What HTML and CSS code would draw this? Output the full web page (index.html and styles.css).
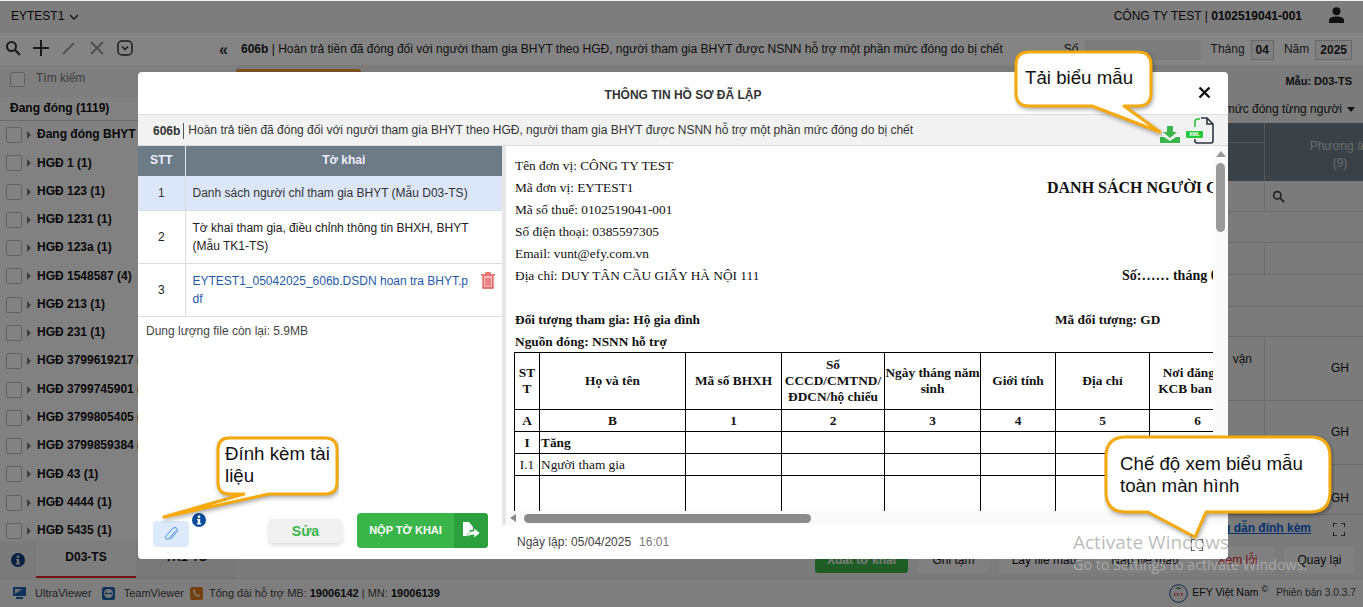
FILE: index.html
```html
<!DOCTYPE html>
<html lang="vi">
<head>
<meta charset="utf-8">
<title>Thông tin hồ sơ đã lập</title>
<link rel="stylesheet" href="styles.css">
</head>
<body>
<div class="app">
  <header class="topbar">
    <div class="unit">EYTEST1 <svg class="chev" width="10" height="6" viewBox="0 0 10 6"><path d="M1 1l4 4 4-4" fill="none" stroke="#222" stroke-width="1.4"/></svg></div>
    <div class="company">CÔNG TY TEST | <b>0102519041-001</b></div>
    <svg class="user" width="17" height="16" viewBox="0 0 17 16"><circle cx="8.5" cy="4.2" r="4" fill="#222"/><path d="M1 16v-2.5C1 10.500 4 9.500 8.500 9.500S16 10.500 16 13.500V16z" fill="#222"/></svg>
  </header>
  <div class="main">
    <aside class="sidebar">
      <div class="tools">
        <svg width="16" height="16" viewBox="0 0 16 16"><circle cx="6.500" cy="6.500" r="4.500" fill="none" stroke="#333" stroke-width="2"/><path d="M10 10l5 5" stroke="#333" stroke-width="2.200"/></svg>
        <svg width="16" height="16" viewBox="0 0 16 16"><path d="M8 0v16M0 8h16" stroke="#333" stroke-width="2"/></svg>
        <svg width="16" height="16" viewBox="0 0 16 16"><path d="M2 14L13 3" stroke="#9a9a9a" stroke-width="2"/></svg>
        <svg width="16" height="16" viewBox="0 0 16 16"><path d="M2 2l12 12M14 2L2 14" stroke="#9a9a9a" stroke-width="2"/></svg>
        <svg width="16" height="16" viewBox="0 0 16 16"><rect x="1" y="1" width="14" height="14" rx="4" fill="none" stroke="#333" stroke-width="1.500"/><path d="M5 6.500l3 3 3-3" fill="none" stroke="#333" stroke-width="1.500"/></svg>
        <span class="collapse">«</span>
      </div>
      <div class="search-row"><span class="check"></span><span>Tìm kiếm</span></div>
      <div class="group-title">Đang đóng (1119)</div>
      <ul class="tree">
        <li><span class="check"></span><i></i>Đang đóng BHYT (1119)</li>
        <li><span class="check"></span><i></i>HGĐ 1 (1)</li>
        <li><span class="check"></span><i></i>HGĐ 123 (1)</li>
        <li><span class="check"></span><i></i>HGĐ 1231 (1)</li>
        <li><span class="check"></span><i></i>HGĐ 123a (1)</li>
        <li><span class="check"></span><i></i>HGĐ 1548587 (4)</li>
        <li><span class="check"></span><i></i>HGĐ 213 (1)</li>
        <li><span class="check"></span><i></i>HGĐ 231 (1)</li>
        <li><span class="check"></span><i></i>HGĐ 3799619217 (1)</li>
        <li><span class="check"></span><i></i>HGĐ 3799745901 (1)</li>
        <li><span class="check"></span><i></i>HGĐ 3799805405 (1)</li>
        <li><span class="check"></span><i></i>HGĐ 3799859384 (1)</li>
        <li><span class="check"></span><i></i>HGĐ 43 (1)</li>
        <li><span class="check"></span><i></i>HGĐ 4444 (1)</li>
        <li><span class="check"></span><i></i>HGĐ 5435 (1)</li>
      </ul>
      <div class="tabs">
        <span class="tab-info"><svg width="14" height="14" viewBox="0 0 14 14"><circle cx="7" cy="7" r="7" fill="#0b3f80"/><rect x="5.800" y="2.500" width="2.400" height="2.400" fill="#ddd"/><path d="M5 6h3.200v4.200H9.200V11.500H4.800V10.200h1V7.200H5z" fill="#ddd"/></svg></span>
        <span class="tab active">D03-TS</span>
        <span class="tab">TK1-TS</span>
      </div>
    </aside>
    <section class="content">
      <div class="title-row">
        <div class="title-text"><b>606b</b> | Hoàn trả tiền đã đóng đối với người tham gia BHYT theo HGĐ, người tham gia BHYT được NSNN hỗ trợ một phần mức đóng do bị chết</div>
        <span class="lbl-so">Số</span><span class="input-so"></span>
        <span class="lbl">Tháng</span><span class="box">04</span>
        <span class="lbl">Năm</span><span class="box">2025</span>
      </div>
      <div class="form-row"><span class="brown"></span><b class="form-code">Mẫu: D03-TS</b></div>
      <div class="filter-row">Quy định mức đóng từng người <i class="caret"></i></div>
      <div class="grid">
        <div class="gh"><span class="gh-line"></span></div><div class="gh gh-r">Phương án<br>(9)</div>
        <div class="gc h31"></div><div class="gc h31 gc-r"><svg width="13" height="13" viewBox="0 0 16 16"><circle cx="6.500" cy="6.500" r="4.500" fill="none" stroke="#444" stroke-width="2"/><path d="M10 10l5 5" stroke="#444" stroke-width="2.200"/></svg></div>
        <div class="gc h31 wide"></div>
        <div class="gc h32"></div><div class="gc h32 gc-r"></div>
        <div class="gc h32 wide"></div>
        <div class="gc h30 wide"></div>
        <div class="gc h64">vận</div><div class="gc h64 gc-r gh-c">GH</div>
        <div class="gc h64"></div><div class="gc h64 gc-r gh-c">GH</div>
        <div class="gc h50"></div><div class="gc h50 gc-r gh-c gh3">GH</div>
      </div>
      <div class="link-row"><a class="guide">Hướng dẫn đính kèm</a><svg width="12" height="13" viewBox="0 0 12 13"><path d="M0 4V0h4M8 0h4v4M12 9v4H8M4 13H0V9" fill="none" stroke="#222" stroke-width="1.600"/></svg></div>
      <div class="actions">
        <button class="act green">Xuất tờ khai</button>
        <button class="act w71">Ghi tạm</button>
        <button class="act w90">Lấy file mẫu</button>
        <button class="act w92">Nạp file mẫu</button>
        <button class="act w73 red">Xem lỗi</button>
        <button class="act w71">Quay lại</button>
      </div>
    </section>
  </div>
  <footer class="footer">
    <svg class="f1" width="13" height="12" viewBox="0 0 13 12"><rect width="13" height="9" fill="#1d62ad"/><path d="M2 7l7-5H2z" fill="#d5d5d5"/><rect x="3" y="10" width="7" height="2" fill="#1d62ad"/></svg>
    <span class="f-link w-uv">UltraViewer</span>
    <svg class="f1" width="13" height="13" viewBox="0 0 13 13"><rect width="13" height="13" rx="2" fill="#1d62ad"/><circle cx="6.500" cy="6.500" r="4.500" fill="#e4e4e4"/><path d="M2.500 6.500l2-1.500v1h4V5l2 1.500-2 1.500V7h-4v1z" fill="#1d62ad"/></svg>
    <span class="f-link w-tv">TeamViewer</span>
    <svg class="f1" width="13" height="13" viewBox="0 0 13 13"><rect width="13" height="13" rx="2" fill="#e07b1f"/><path d="M3.500 3c1-.8 1.500-.5 2 1 .2.600-.7 1-.5 1.500.4 1 1.200 1.800 2 2.300.5.200.9-.7 1.500-.5 1.500.5 1.800 1 1 2-1 1-3 .5-4.500-1S2.500 4 3.500 3z" fill="#f5e3c8"/></svg>
    <span class="hotline">Tổng đài hỗ trợ MB: <b>19006142</b> | MN: <b>19006139</b></span>
    <span class="spacer"></span>
    <svg class="efy" width="19" height="19" viewBox="0 0 19 19"><circle cx="9.500" cy="9.500" r="8.800" fill="#eee" stroke="#1d4f91" stroke-width="1"/><text x="9.500" y="11.500" text-anchor="middle" class="efy-t">EFY</text><path d="M6 5l3.500-2L13 5z" fill="#2f8f46"/></svg>
    <span class="efy-name">EFY Việt Nam<sup>©</sup></span>
    <span class="version">Phiên bản 3.0.3.7</span>
  </footer>
</div>

<div class="backdrop"></div>

<div class="modal">
  <div class="m-head">THÔNG TIN HỒ SƠ ĐÃ LẬP
    <svg class="m-close" width="13" height="13" viewBox="0 0 13 13"><path d="M1.500 1.500l10 10M11.500 1.500l-10 10" stroke="#111" stroke-width="2.400"/></svg>
  </div>
  <div class="m-sub">
    <b>606b</b><span class="m-sub-text">Hoàn trả tiền đã đóng đối với người tham gia BHYT theo HGĐ, người tham gia BHYT được NSNN hỗ trợ một phần mức đóng do bị chết</span>
    <svg class="dl" width="20" height="17" viewBox="0 0 20 17"><path d="M7 0h6v6h4l-7 6-7-6h4z" fill="#3ab54a"/><path d="M0 11h4l6 4 6-4h4v6H0z" fill="#3ab54a"/></svg>
    <span class="xml-ic">
      <svg width="28" height="27" viewBox="0 0 28 27"><path d="M9 10V5c0-2 1-3 3-3h2" fill="none" stroke="#2fc03d" stroke-width="1.600"/><path d="M15 1h6l6 6v17c0 1-1 2-2 2H11c-1 0-2-.5-2-2v-2M21 1v6h6" fill="none" stroke="#2b3440" stroke-width="1.600"/></svg>
      <span class="xml-badge">XML</span>
    </span>
  </div>
  <div class="m-body">
    <div class="m-left">
      <table class="forms">
        <thead><tr><th class="c-stt">STT</th><th>Tờ khai</th></tr></thead>
        <tbody>
          <tr class="sel r1"><td class="c-stt">1</td><td>Danh sách người chỉ tham gia BHYT (Mẫu D03-TS)</td></tr>
          <tr class="r2"><td class="c-stt">2</td><td>Tờ khai tham gia, điều chỉnh thông tin BHXH, BHYT (Mẫu TK1-TS)</td></tr>
          <tr class="r2"><td class="c-stt">3</td><td class="file-cell"><a class="file">EYTEST1_05042025_606b.DSDN hoan tra BHYT.pdf</a>
            <svg class="trash" width="14" height="17" viewBox="0 0 14 17"><path d="M0 3h14M5 3V1h4v2" fill="none" stroke="#e0504f" stroke-width="1.300"/><path d="M2 4v12h10V4" fill="#f4b9b8" stroke="#e0504f" stroke-width="1.300"/><path d="M5 6v8M7 6v8M9 6v8" stroke="#e0504f"/></svg></td></tr>
        </tbody>
      </table>
      <p class="quota">Dung lượng file còn lại: 5.9MB</p>
      <div class="m-actions">
        <span class="clip-wrap">
          <button class="clip"><svg width="14" height="16" viewBox="0 0 14 16"><path d="M11.500 4L5 11.500c-1 1.100-2.300.9-3 .2s-.7-2 .2-3l6.300-7c1.500-1.500 3.500-1.200 4.300-.3s.8 2.500-.3 3.800L6.500 12.500" transform="translate(0 1)" fill="none" stroke="#3b86e0" stroke-width="1"/></svg></button>
          <svg class="clip-info" width="14" height="14" viewBox="0 0 14 14"><circle cx="7" cy="7" r="7" fill="#0b4c9c"/><rect x="5.800" y="2.500" width="2.400" height="2.400" fill="#fff"/><path d="M5 6h3.200v4.200H9.200V11.500H4.800V10.200h1V7.200H5z" fill="#fff"/></svg>
        </span>
        <button class="edit">Sửa</button>
        <button class="submit"><span class="submit-t">NỘP TỜ KHAI</span><span class="submit-i"><svg width="18" height="17" viewBox="0 0 18 17"><path d="M1 0h6l4 5v3H8v6H1z" fill="#fff"/><path d="M5 15c0-4 3-6 7-6V6l6 5-6 5v-3c-3 0-5 0-7 2z" fill="#fff" stroke="#2ba03c" stroke-width=".6"/></svg></span></button>
      </div>
    </div>
    <div class="m-right">
      <div class="doc-view">
        <div class="doc">
          <div class="doc-top">
            <div class="doc-info">
              <p>Tên đơn vị: CÔNG TY TEST</p>
              <p>Mã đơn vị: EYTEST1</p>
              <p>Mã số thuế: 0102519041-001</p>
              <p>Số điện thoại: 0385597305</p>
              <p>Email: vunt@efy.com.vn</p>
              <p>Địa chỉ: DUY TÂN CẦU GIẤY HÀ NỘI 111</p>
            </div>
            <div class="doc-title">
              <h2>DANH SÁCH NGƯỜI CHỈ THAM GIA BHYT</h2>
              <p class="doc-no">Số:…… tháng 04 năm 2025</p>
            </div>
          </div>
          <div class="doc-meta"><b>Đối tượng tham gia: Hộ gia đình</b><b class="doc-mdt">Mã đối tượng: GD</b></div>
          <p class="doc-src"><b>Nguồn đóng: NSNN hỗ trợ</b></p>
          <table class="doc-table">
            <colgroup><col class="d1"><col class="d2"><col class="d3"><col class="d4"><col class="d3"><col class="d6"><col class="d7"><col class="d8"></colgroup>
            <tr class="dh"><th>STT</th><th>Họ và tên</th><th>Mã số BHXH</th><th>Số<br>CCCD/CMTND/<br>ĐDCN/hộ chiếu</th><th>Ngày tháng năm sinh</th><th>Giới tính</th><th>Địa chỉ</th><th>Nơi đăng ký KCB ban đầu</th></tr>
            <tr class="dr"><th>A</th><th>B</th><th>1</th><th>2</th><th>3</th><th>4</th><th>5</th><th>6</th></tr>
            <tr class="dr"><th>I</th><th class="l">Tăng</th><td></td><td></td><td></td><td></td><td></td><td></td></tr>
            <tr class="dr"><td class="c">I.1</td><td>Người tham gia</td><td></td><td></td><td></td><td></td><td></td><td></td></tr>
            <tr class="dl-row"><td></td><td></td><td></td><td></td><td></td><td></td><td></td><td></td></tr>
          </table>
        </div>
        <div class="vbar"><i class="v-up"></i><i class="v-thumb"></i></div>
        <div class="hbar"><i class="h-left"></i><i class="h-thumb"></i></div>
      </div>
      <div class="doc-foot"><span>Ngày lập: 05/04/2025</span><span class="time">16:01</span>
        <svg class="fs" width="12" height="12" viewBox="0 0 12 12"><path d="M0 4V0h4M8 0h4v4M12 8v4H8M4 12H0V8" fill="none" stroke="#333" stroke-width="1.600"/></svg>
      </div>
    </div>
  </div>
</div>

<div class="callout c-a">
  <svg width="150" height="90" viewBox="0 0 150 90"><path class="shape" d="M15 2H124Q137 2 137 15V43Q137 56 124 56H110L146 82 78 56H15Q2 56 2 43V15Q2 2 15 2Z"/></svg>
  <span class="c-text">Tải biểu mẫu</span>
</div>
<div class="callout c-b">
  <svg width="190" height="90" viewBox="0 0 190 90"><path class="shape" d="M80 2H176Q188 2 188 14V46Q188 58 176 58H120L15 81 95 58H80Q69 58 69 46V14Q69 2 80 2Z"/></svg>
  <span class="c-text">Đính kèm tài liệu</span>
</div>
<div class="callout c-c">
  <svg width="230" height="106" viewBox="0 0 230 106"><path class="shape" d="M22 2H206Q226 2 226 22V57Q226 77 206 77H102L91 102 44 77H22Q2 77 2 57V22Q2 2 22 2Z"/></svg>
  <span class="c-text">Chế độ xem biểu mẫu toàn màn hình</span>
</div>

<div class="watermark"><div class="wm1">Activate Windows</div><div class="wm2">Go to Settings to activate Windows.</div></div>
</body>
</html>
```
FILE: styles.css
```css
* { box-sizing: border-box; }
html, body { margin: 0; height: 100%; }
body {
  position: relative;
  width: 1363px;
  height: 607px;
  overflow: hidden;
  font: 12px/1.3 "Liberation Sans", Arial, sans-serif;
  color: #222;
  background: #f0f0f0;
}
p, h2, ul { margin: 0; padding: 0; }
button { font-family: inherit; border: 0; padding: 0; }

.app { display: flex; flex-direction: column; height: 607px; }

.topbar { height: 33px; flex: none; display: flex; align-items: center; padding: 1px 18px 0 11px; background: #f0f0f0; }
.unit { display: flex; align-items: center; gap: 5px; font-size: 12px; color: #111; }
.company { margin-left: auto; color: #111; }
.user { margin-left: 26px; margin-top: -4px; }

.main { flex: 1; display: flex; min-height: 0; }
.sidebar { width: 236px; flex: none; display: flex; flex-direction: column; background: #f8f8f8; overflow: hidden; }
.tools { height: 32px; flex: none; display: flex; align-items: center; gap: 12px; padding: 0 8px 2px 5px; background: #fdfdfd; }
.tools svg { flex: none; }
.collapse { margin-left: auto; font-size: 16px; font-weight: 700; color: #333; margin-top: 4px; }
.search-row { height: 32px; flex: none; display: flex; align-items: center; gap: 11px; padding: 0 0 4px 10px; color: #777; background: #f2f2f2; }
.check { display: block; width: 16px; height: 16px; flex: none; border: 1px solid #bdbdbd; border-radius: 2px; background: #fafafa; }
.search-row .check { width: 15px; height: 15px; }
.group-title { height: 24px; flex: none; display: flex; align-items: center; padding-left: 10px; font-weight: 700; color: #111; background: #f8f8f8; border-bottom: 1px solid #ccc; }
.tree { list-style: none; flex: none; height: 420px; overflow: hidden; }
.tree li { height: 28.28px; display: flex; align-items: center; white-space: nowrap; padding-left: 6px; font-weight: 700; color: #111; }
.tree i { width: 0; height: 0; margin: 0 6px 0 5px; border-left: 4px solid #777; border-top: 4px solid transparent; border-bottom: 4px solid transparent; }
.tabs { flex: 1; display: flex; background: #ececec; min-height: 0; border-top: 1px solid #eee; }
.tab-info { width: 36px; display: flex; align-items: center; justify-content: center; }
.tab { width: 100px; text-align: center; font-weight: 700; line-height: 30px; color: #111; background: #e6e6e6; }
.tab.active { background: #f2f2f2; border-bottom: 2px solid #d8262c; }

.content { flex: 1; min-width: 0; display: flex; flex-direction: column; background: #ebebeb; }
.title-row { height: 32px; flex: none; display: flex; align-items: center; padding: 1px 11px 0 5px; background: #fdfdfd; color: #222; }
.title-text { width: 829px; white-space: nowrap; }
.lbl-so { color: #222; }
.input-so { width: 116px; height: 20px; margin: 0 10px 0 7px; background: #eee; }
.lbl { margin-right: 6px; color: #333; font-size: 12px; }
.box { height: 20px; padding: 0 4px; margin-right: 10px; border: 1px solid #c8c8c8; font-weight: 700; line-height: 18px; background: #f5f5f5; }
.box:last-child { margin-right: 0; }
.form-row { height: 31px; flex: none; display: flex; justify-content: space-between; padding: 0 11px 0 0; font-size: 11px; }
.brown { width: 125px; height: 20px; margin-top: 4px; background: #e89b3c; border-radius: 3px; }
.form-code { margin-top: 9px; }
.filter-row { height: 27px; flex: none; display: flex; align-items: center; justify-content: flex-end; gap: 5px; padding: 0 8px 0 0; color: #222; }
.caret { width: 0; height: 0; border-top: 5px solid #222; border-left: 4px solid transparent; border-right: 4px solid transparent; }
.grid { display: grid; grid-template-columns: 1fr 150px; margin-right: -52px; flex: none; }
.gh { height: 58px; background: #727f89; border-right: 1px solid #aaa; position: relative; }
.gh-line { display: block; height: 20px; border-bottom: 1px solid #aaa; }
.gh-r { color: #ccc; text-align: center; padding-top: 15px; border-right: 0; white-space: nowrap; overflow: hidden; line-height: 17px; font-size: 12px; }
.gc { border-bottom: 1px solid #d2d2d2; border-right: 1px solid #d2d2d2; padding-left: 4px; }
.gc-r { border-right: 0; padding-left: 7px; color: #111; display: flex; align-items: center; }
.gh-c { justify-content: center; padding-left: 0; }
.h31 { height: 31px; } .h32 { height: 32px; } .h30 { height: 30px; } .h64 { height: 64px; } .h50 { height: 50px; }
.wide { grid-column: 1 / -1; border-right: 0; }
.h64:not(.gc-r) { padding-top: 15px; text-align: right; padding-right: 12px; }
.gh3 { align-items: flex-start; padding-top: 26px; }
.link-row { height: 32px; flex: none; display: flex; align-items: center; justify-content: flex-end; gap: 22px; padding: 0 18px 4px 0; }
.guide { color: #0b5ed7; font-weight: 700; text-decoration: underline; }
.actions { flex: none; display: flex; justify-content: flex-end; gap: 10px; padding-right: 8px; }
.act { height: 26px; width: 93px; font-size: 12px; border-radius: 3px; background: #f5f5f5; color: #111; }
.act.green { background: #3ab54a; color: #eee; font-weight: 700; }
.w71 { width: 71px; } .w90 { width: 90px; } .w92 { width: 92px; } .w73 { width: 73px; }
.red { color: #d8262c; }

.footer { height: 29px; flex: none; display: flex; align-items: center; padding: 0 7px 0 13px; background: #f2f2f2; font-size: 11px; color: #444; border-top: 1px solid #ddd; }
.f-link { color: #444; }
.w-uv { margin: 0 10px 0 9px; } .w-tv { margin: 0 6px 0 9px; }
.hotline { margin-left: 6px; font-size: 11px; }
.hotline b { color: #111; }
.spacer { flex: 1; }
.efy-t { font: 700 5px "Liberation Serif", serif; fill: #d8262c; }
.efy-name { margin-left: 4px; color: #111; white-space: nowrap; font-size: 10.500px; }
.efy-name sup { font-size: 9px; margin-left: 3px; line-height: 0; }
.version { margin-left: 8px; color: #444; font-size: 10.200px; }

.backdrop { position: absolute; inset: 1px 0 0 0; background: rgba(0,0,0,.48); }

.modal { position: absolute; left: 138px; top: 72px; width: 1090px; height: 487px; background: #fff; border-radius: 4px; display: flex; flex-direction: column; overflow: hidden; }
.m-head { height: 42px; flex: none; display: flex; align-items: center; justify-content: center; position: relative; padding-top: 5px; font-weight: 700; color: #333; font-size: 12px; }
.m-close { position: absolute; right: 17px; top: 14px; }
.m-sub { height: 32px; flex: none; display: flex; align-items: center; padding: 1px 14px 0 15px; background: #f2f2f2; border-top: 1px solid #ddd; border-bottom: 1px solid #ddd; color: #333; }
.m-sub b { padding-right: 3px; border-right: 1px solid #555; line-height: 16px; }
.m-sub-text { padding-left: 4px; white-space: nowrap; }
.dl { margin-left: auto; margin-top: 7px; }
.xml-ic { position: relative; display: block; width: 28px; height: 27px; margin-left: 6px; margin-top: -1px; }
.xml-ic svg { display: block; }
.xml-badge { position: absolute; left: 0; top: 14px; width: 17px; height: 7px; background: #25c93a; color: #fff; font-size: 5px; line-height: 7px; font-weight: 700; text-align: center; border-radius: 1px; }

.m-body { flex: 1; display: flex; min-height: 0; }
.m-left { width: 364px; flex: none; display: flex; flex-direction: column; }
.forms { width: 100%; border-collapse: collapse; table-layout: fixed; }
.forms th { height: 30px; background: #6c7b85; color: #eef; font-weight: 700; border-right: 1px solid #e8e8e8; }
.forms th:last-child { border-right: 0; }
.forms td { padding: 0 7px; line-height: 18px; border-bottom: 1px solid #ddd; color: #222; height: 53px; }
.c-stt { width: 47px; text-align: center; border-right: 1px solid #ddd; }
.forms td.c-stt { padding: 0; }
.r1 td { height: 34px; }
.sel td { background: #dbe6f9; color: #333; }
.file-cell { position: relative; padding-right: 32px !important; word-break: break-all; }
.file { color: #1f5aa8; }
.trash { position: absolute; right: 7px; top: 8px; }
.quota { padding: 7px 8px; line-height: 15px; color: #444; }
.m-actions { margin-top: auto; padding: 0 14px 11px 15px; display: flex; align-items: flex-end; }
.clip-wrap { position: relative; display: block; width: 36px; height: 26px; margin-right: 80px; margin-bottom: 1px; }
.clip { width: 36px; height: 26px; border-radius: 4px; background: #dceafb; display: flex; align-items: center; justify-content: center; }
.clip-info { position: absolute; left: 39px; top: -8px; }
.edit { width: 73px; height: 24px; margin-right: 15px; margin-bottom: 5px; border-radius: 4px; background: #f0f0f0; color: #3ab54a; font-weight: 700; font-size: 14px; box-shadow: 0 2px 4px rgba(0,0,0,.15); }
.submit { display: flex; height: 35px; width: 131px; border-radius: 4px; overflow: hidden; color: #fff; font-weight: 700; font-size: 11px; background: #3ab54a; }
.submit-t { flex: 1; line-height: 35px; text-align: center; }
.submit-i { width: 34px; background: #2ba03c; display: flex; align-items: center; justify-content: center; }

.m-right { flex: 1; min-width: 0; display: flex; flex-direction: column; }
.doc-view { flex: 1; position: relative; overflow: hidden; min-height: 0; border-left: 4px solid #e6e6e6; }
.doc { width: 1000px; height: 365px; padding: 9px 0 0 9px; overflow: hidden; font: 13.330px/22px "Liberation Serif", "Times New Roman", serif; color: #111; }
.doc-top { display: flex; }
.doc-info { width: 532px; flex: none; }
.doc-title h2 { font-size: 16px; line-height: 22px; padding-top: 22px; white-space: nowrap; }
.doc-no { padding: 66px 0 0 75px; font-weight: 700; white-space: nowrap; font-size: 14px; }
.doc-meta { display: flex; margin-top: 22px; }
.doc-meta b:first-child { width: 540px; }
.doc-table { border-collapse: collapse; table-layout: fixed; width: 731px; margin: -1px 0 0 -1px; font-size: 13.330px; line-height: 16px; }
.doc-table th, .doc-table td { border: 1px solid #000; padding: 0; text-align: center; overflow-wrap: anywhere; }
.doc-table th:first-child { padding: 0 2px; }
.doc-table td { text-align: left; padding: 0 1px; }
.doc-table td.c { text-align: center; }
.doc-table th.l { text-align: left; padding: 0 1px; }
.d1 { width: 25px; } .d2 { width: 146px; } .d3 { width: 96px; } .d4 { width: 103px; } .d6 { width: 75px; } .d7 { width: 94px; } .d8 { width: 96px; }
.dh { height: 57px; } .dr { height: 22px; } .dl-row { height: 60px; }
.vbar { position: absolute; right: 0; top: 0; bottom: 0; width: 15px; background: #fafafa; }
.v-up { position: absolute; left: 3px; top: 5px; width: 0; height: 0; border-bottom: 6px solid #999; border-left: 5px solid transparent; border-right: 5px solid transparent; }
.v-thumb { position: absolute; left: 3px; top: 17px; width: 9px; height: 69px; border-radius: 5px; background: #9a9a9a; }
.hbar { position: absolute; left: 0; right: 15px; bottom: 0; height: 14px; background: #fafafa; }
.h-left { position: absolute; left: 4px; top: 3px; width: 0; height: 0; border-right: 6px solid #888; border-top: 4px solid transparent; border-bottom: 4px solid transparent; }
.h-thumb { position: absolute; left: 18px; top: 3px; width: 287px; height: 9px; border-radius: 5px; background: #8a8a8a; }
.doc-foot { height: 34px; flex: none; display: flex; align-items: center; padding: 2px 25px 0 15px; color: #444; }
.time { margin-left: 8px; color: #777; }
.fs { margin-left: auto; margin-top: 3px; }

.callout { position: absolute; }
.callout svg { display: block; }
.shape { fill: #fff; stroke: #f5a90c; stroke-width: 3; stroke-linejoin: round; filter: drop-shadow(1px 2px 2px rgba(0,0,0,.35)); }
.c-text { position: absolute; font-size: 18.700px; line-height: 22px; color: #111; }
.c-a { left: 1014px; top: 50px; }
.c-a .c-text { left: 11px; top: 17px; white-space: nowrap; }
.c-b { left: 149px; top: 436px; }
.c-b .c-text { left: 76px; top: 7px; width: 110px; }
.c-c { left: 1104px; top: 435px; }
.c-c .c-text { left: 16px; top: 18px; width: 200px; }

.watermark { position: absolute; left: 1073px; top: 529px; pointer-events: none; white-space: nowrap; font-family: "Open Sans", sans-serif; }
.wm1 { font-size: 19px; line-height: 26px; color: rgba(130,130,130,.55); }
.wm2 { font-size: 14.300px; line-height: 22px; margin-top: -1px; color: rgba(255,255,255,.35); }
```
